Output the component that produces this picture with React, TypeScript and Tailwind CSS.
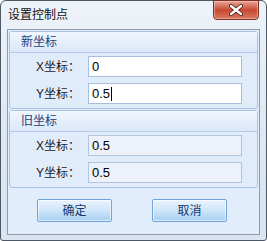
import React from "react";

const font = { fontFamily: '"Liberation Sans", "Noto Sans CJK SC", sans-serif' };

function Field({ label, value, disabled, caret }: { label: string; value: string; disabled?: boolean; caret?: boolean }) {
  return (
    <div className="flex h-[21px] items-center">
      <div className="w-[78px] pl-[26px] text-[12px] text-[#1a1a1a]">{label}</div>
      <div
        className={`flex h-[21px] w-[154px] items-center border px-[3px] text-[13px] text-black ${
          disabled ? "border-[#b2c5df] bg-[#edf1f9]" : "border-[#a7bfdd] bg-white"
        }`}
      >
        {value}
        {caret && <span className="ml-[1px] inline-block h-[14px] w-px bg-black" />}
      </div>
    </div>
  );
}

function Group({ title, children }: { title: string; children: React.ReactNode }) {
  return (
    <div className="rounded-[3px] border border-[#abc3e3] bg-[#e1ecfb]">
      <div className="flex h-[21px] items-center border-b border-[#b4cae7] bg-gradient-to-b from-[#f0f6fe] to-[#dbe8f9] pl-[11px] text-[12px] text-[#1d3f7a]">
        {title}
      </div>
      <div className="flex flex-col gap-[6px] pt-[3px] pb-[4px]">{children}</div>
    </div>
  );
}

function Btn({ children }: { children: React.ReactNode }) {
  return (
    <button className="h-[23px] w-[75px] rounded-[2px] border border-[#6fa3db] bg-gradient-to-b from-[#eaf4fd] via-[#cfe5fa] to-[#a7cff2] text-[12px] text-[#17386d] shadow-[inset_0_0_0_1px_rgba(255,255,255,0.6)]">
      {children}
    </button>
  );
}

export default function App() {
  return (
    <div style={font} className="h-[241px] w-[267px] select-none">
      <div className="flex h-full w-full flex-col rounded-t-[6px] rounded-b-[3px] border border-[#4d5866] bg-gradient-to-b from-[#eef3f9] via-[#dfe8f2] to-[#d9e4f0] px-[6px] pb-[5px]">
        <div className="relative flex h-[28px] items-center">
          <span className="pl-[1px] text-[12px] text-[#111]">设置控制点</span>
          <div className="absolute -top-px right-[1px] flex h-[20px] w-[46px] items-center justify-center rounded-b-[4px] border border-[#7b3024] bg-gradient-to-b from-[#e7a799] via-[#c8472f] to-[#d77a5f] shadow-[inset_0_0_0_1px_rgba(255,210,200,0.5)]">
            <svg width="16" height="12" viewBox="0 0 16 12">
              <path d="M3 2 L13 10 M13 2 L3 10" stroke="#4a1a12" strokeWidth="4" strokeLinecap="round" />
              <path d="M3 2 L13 10 M13 2 L3 10" stroke="#fff" strokeWidth="2.4" strokeLinecap="round" />
            </svg>
          </div>
        </div>
        <div className="flex flex-1 flex-col border border-[#8e9cad] bg-[#e2edfb] px-px pt-px">
          <div className="flex flex-col gap-[1px]">
            <Group title="新坐标">
              <Field label="X坐标：" value="0" />
              <Field label="Y坐标：" value="0.5" caret />
            </Group>
            <Group title="旧坐标">
              <Field label="X坐标：" value="0.5" disabled />
              <Field label="Y坐标：" value="0.5" disabled />
            </Group>
          </div>
          <div className="flex justify-between pl-[28px] pr-[31px] pt-[11px]">
            <Btn>确定</Btn>
            <Btn>取消</Btn>
          </div>
        </div>
      </div>
    </div>
  );
}
